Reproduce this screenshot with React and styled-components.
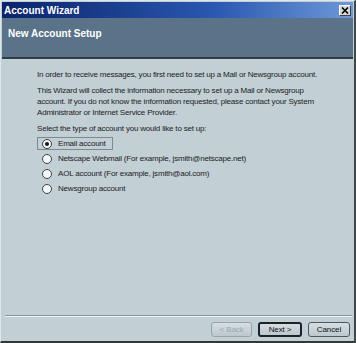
import React, { useState } from "react";
import styled, { createGlobalStyle } from "styled-components";

const GlobalStyle = createGlobalStyle`
  html, body {
    margin: 0;
    padding: 0;
    background: #c2cfd4;
  }
  * { box-sizing: border-box; }
`;

const Window = styled.div`
  width: 356px;
  height: 343px;
  display: flex;
  flex-direction: column;
  background: #c2cfd4;
  border-left: 1px solid #dfe7ea;
  border-top: 1px solid #dfe7ea;
  border-right: 2px solid #404848;
  border-bottom: 2px solid #303838;
  font-family: "Liberation Sans", Arial, sans-serif;
  color: #1c2226;
  overflow: hidden;
`;

const TitleBar = styled.div`
  height: 16px;
  margin: 1px 1px 0 1px;
  display: flex;
  align-items: center;
  justify-content: space-between;
  padding: 0 2px 0 2px;
  background: linear-gradient(to right, #0a246a 0%, #2a57b0 60%, #6e98d8 100%);
`;

const Title = styled.span`
  font-weight: bold;
  font-size: 10px;
  color: #ffffff;
`;

const CloseButton = styled.div`
  width: 12px;
  height: 11px;
  background: #d4d8dc;
  border: 1px solid;
  border-color: #ffffff #404040 #404040 #ffffff;
  display: flex;
  align-items: center;
  justify-content: center;
`;

const Header = styled.div`
  height: 41px;
  margin: 0 1px;
  padding: 10px 6px 0;
  background: #5b7388;
  border-bottom: 2px solid #2e3c48;
`;

const HeaderTitle = styled.div`
  font-weight: bold;
  font-size: 10px;
  color: #ffffff;
`;

const Body = styled.div`
  flex: 1;
  padding: 10px 0 0 36px;
  display: flex;
  flex-direction: column;
`;

const Paragraph = styled.p`
  margin: 0 0 5px;
  font-size: 8px;
  line-height: 11px;
  letter-spacing: -0.2px;
  width: 300px;
`;

const Options = styled.div`
  display: flex;
  flex-direction: column;
  gap: 2px;
  margin-top: -2px;
`;

const Option = styled.label`
  align-self: flex-start;
  display: flex;
  align-items: center;
  gap: 6px;
  height: 13px;
  padding: 0 6px 0 4px;
  border: 1px solid ${(p) => (p.$focused ? "#7f8a90" : "transparent")};
  font-size: 8px;
  letter-spacing: -0.2px;
  cursor: default;
`;

const Radio = styled.span`
  width: 10px;
  height: 10px;
  border-radius: 50%;
  border: 1px solid #3c4448;
  background: #f4f6f7;
  display: flex;
  align-items: center;
  justify-content: center;

  &::after {
    content: "";
    width: 4px;
    height: 4px;
    border-radius: 50%;
    background: ${(p) => (p.$checked ? "#141a1e" : "transparent")};
  }
`;

const Footer = styled.div`
  padding: 0 2px 4px 4px;
`;

const Separator = styled.div`
  height: 2px;
  border-top: 1px solid #8a969c;
  border-bottom: 1px solid #eef2f4;
  margin-bottom: 5px;
`;

const ButtonRow = styled.div`
  display: flex;
  justify-content: flex-end;
  gap: 6px;
  padding-right: 2px;
`;

const Button = styled.button`
  height: 15px;
  width: ${(p) => p.$w}px;
  padding: 0;
  font-family: "Liberation Sans", Arial, sans-serif;
  font-size: 8px;
  letter-spacing: -0.1px;
  color: ${(p) => (p.disabled ? "#9aa6ac" : "#111")};
  background: linear-gradient(#d6dee2, #bcc8ce);
  border: ${(p) => (p.$default ? "2px solid #1c2226" : "1px solid #50585c")};
  border-color: ${(p) => (p.disabled ? "#98a4aa" : undefined)};
  border-radius: 3px;
`;

const options = [
  "Email account",
  "Netscape Webmail (For example, jsmith@netscape.net)",
  "AOL account (For example, jsmith@aol.com)",
  "Newsgroup account",
];

export default function App() {
  const [selected, setSelected] = useState(0);
  return (
    <>
      <GlobalStyle />
      <Window>
        <TitleBar>
          <Title>Account Wizard</Title>
          <CloseButton>
            <svg width="8" height="7" viewBox="0 0 8 7">
              <path d="M1 0.5 L7 6.5 M7 0.5 L1 6.5" stroke="#000" strokeWidth="1.6" />
            </svg>
          </CloseButton>
        </TitleBar>
        <Header>
          <HeaderTitle>New Account Setup</HeaderTitle>
        </Header>
        <Body>
          <Paragraph>
            In order to receive messages, you first need to set up a Mail or Newsgroup account.
          </Paragraph>
          <Paragraph>
            This Wizard will collect the information necessary to set up a Mail or Newsgroup
            <br />
            account. If you do not know the information requested, please contact your System
            <br />
            Administrator or Internet Service Provider.
          </Paragraph>
          <Paragraph>Select the type of account you would like to set up:</Paragraph>
          <Options>
            {options.map((label, i) => (
              <Option key={label} $focused={i === selected} onClick={() => setSelected(i)}>
                <Radio $checked={i === selected} />
                {label}
              </Option>
            ))}
          </Options>
        </Body>
        <Footer>
          <Separator />
          <ButtonRow>
            <Button $w={41} disabled>&lt; Back</Button>
            <Button $w={44} $default>Next &gt;</Button>
            <Button $w={42}>Cancel</Button>
          </ButtonRow>
        </Footer>
      </Window>
    </>
  );
}
